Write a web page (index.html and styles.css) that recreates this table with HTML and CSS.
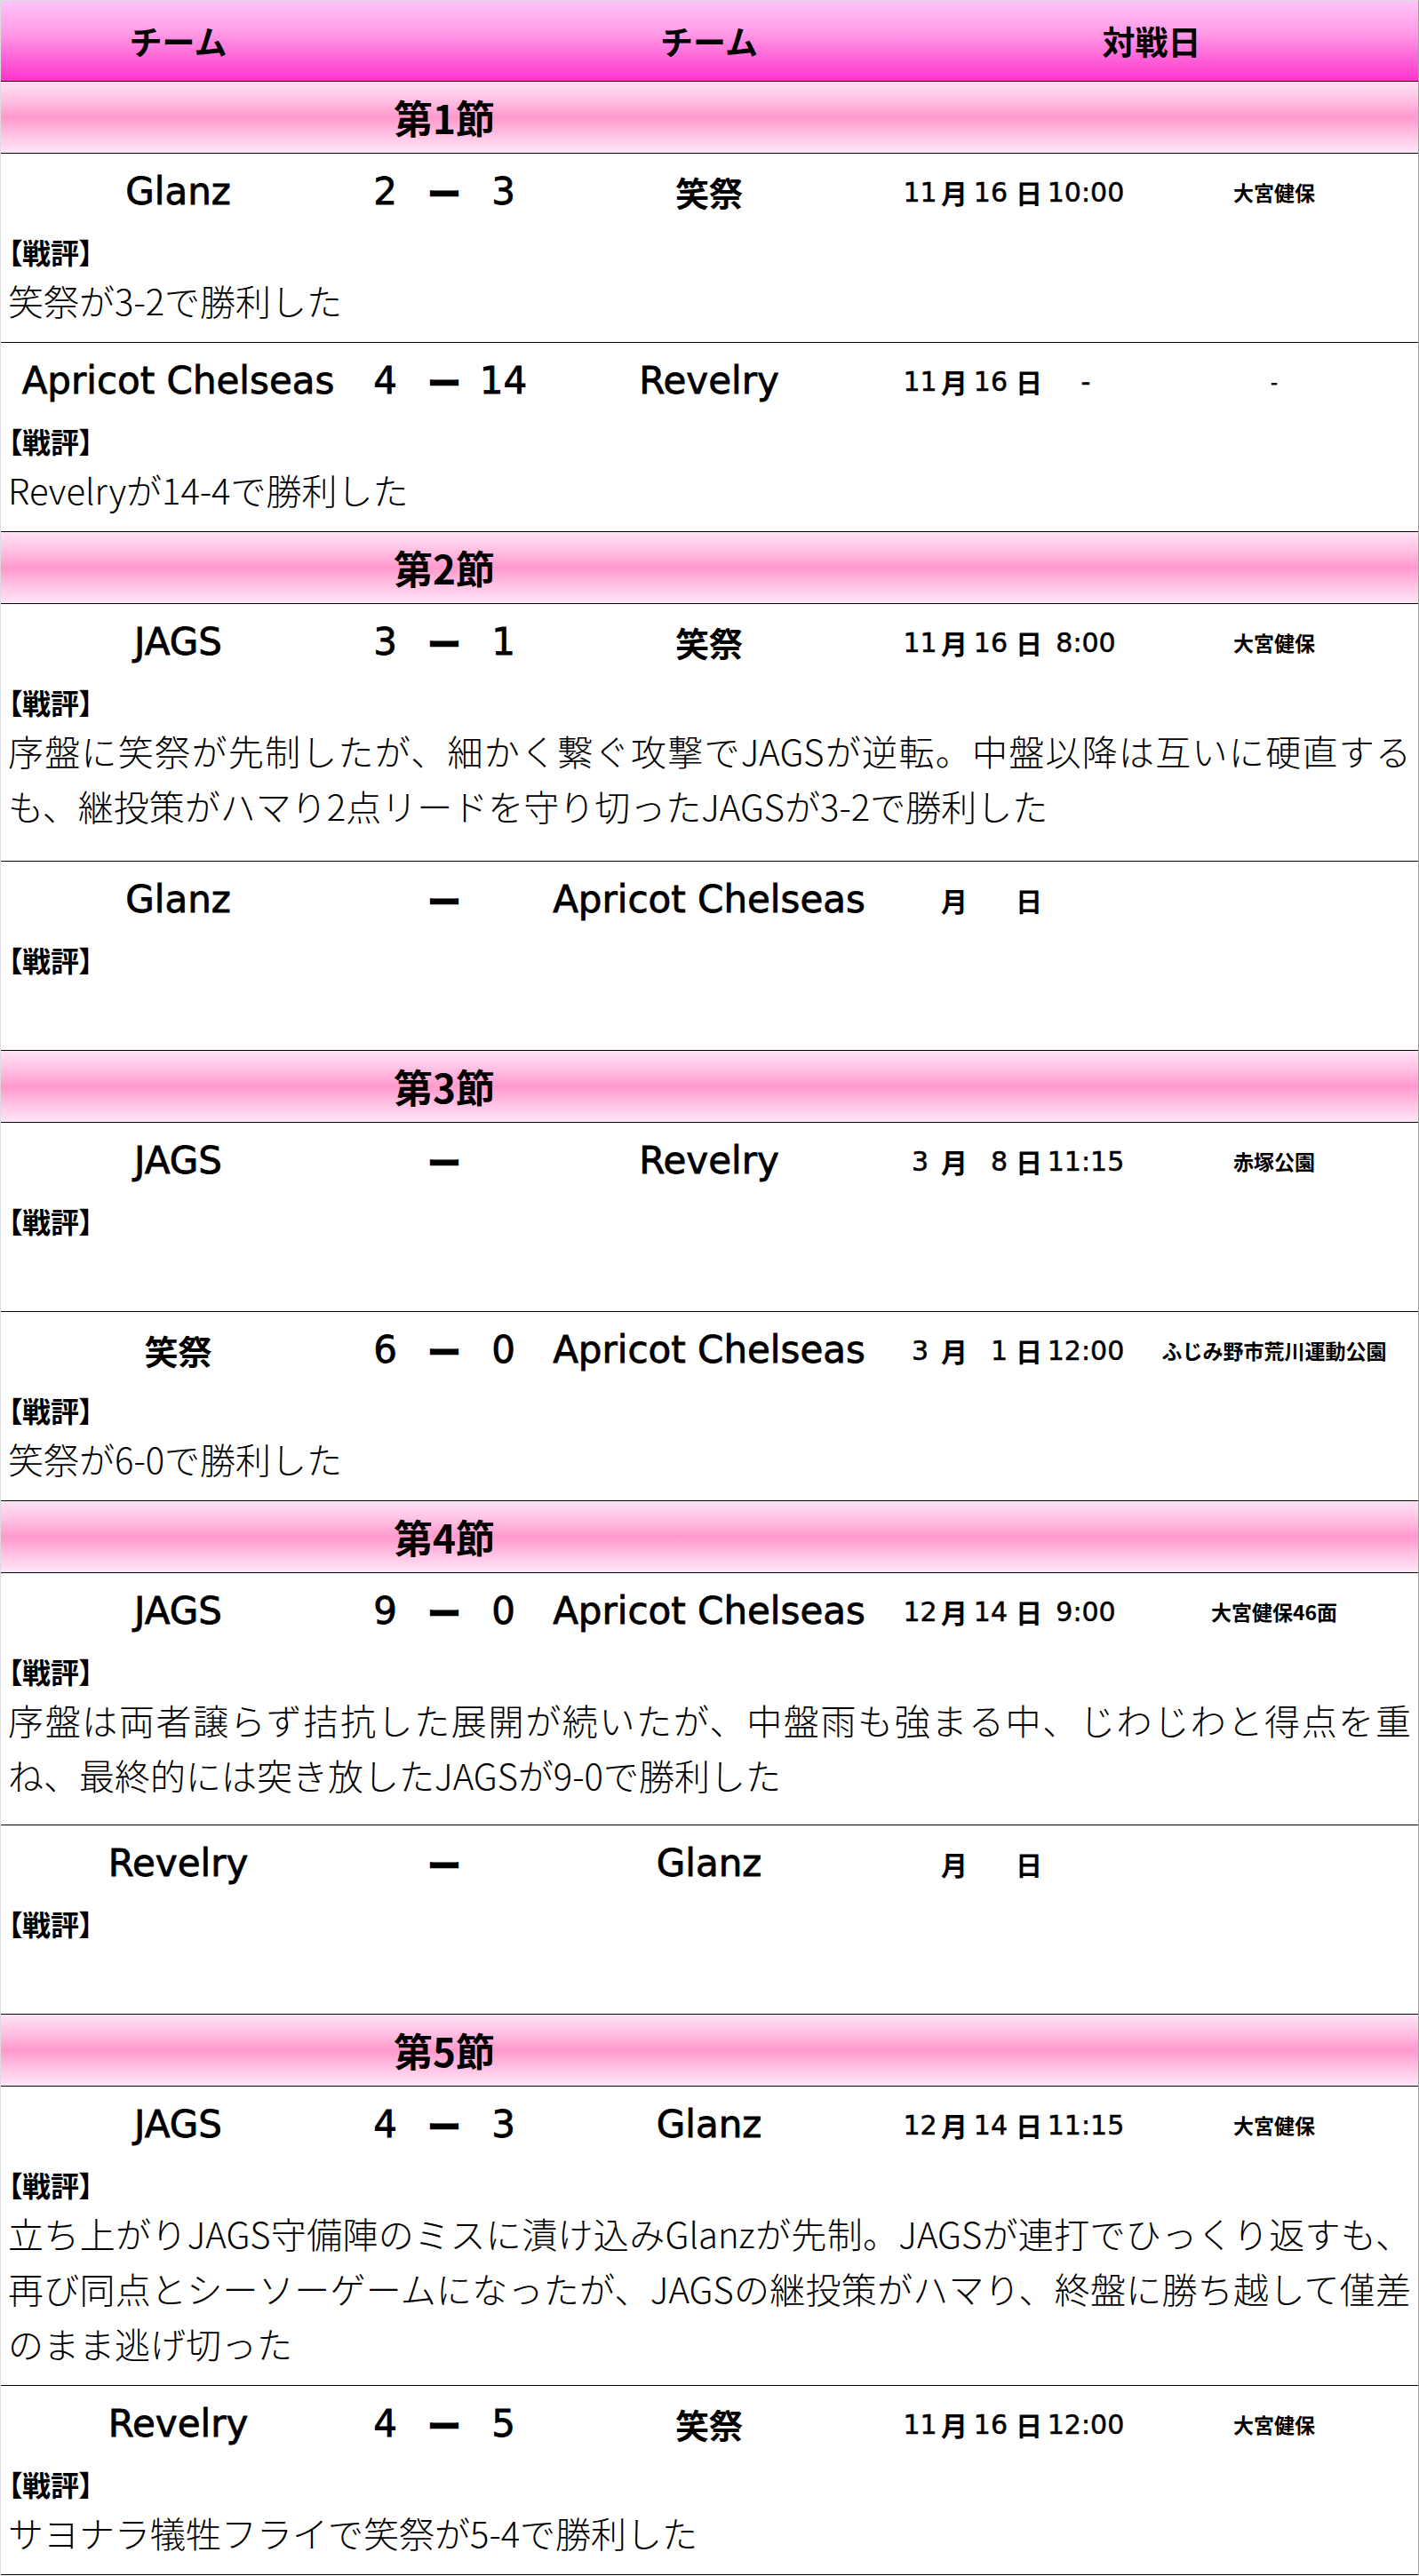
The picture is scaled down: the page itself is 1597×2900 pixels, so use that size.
FILE: index.html
```html
<!DOCTYPE html>
<html lang="ja">
<head>
<meta charset="utf-8">
<title>対戦表</title>
<link rel="stylesheet" href="styles.css">
</head>
<body>
<div class="board">
  <div class="grid head">
    <div class="h-team1">チーム</div>
    <div class="h-team2">チーム</div>
    <div class="h-when">対戦日</div>
  </div>

  <div class="grid sec"><div class="sec-label">第1節</div></div>

  <div class="match">
    <div class="grid line">
      <div class="team t1">Glanz</div>
      <div class="sc s1">2</div><div class="sc dash">ー</div><div class="sc s2">3</div>
      <div class="team t2 jp">笑祭</div>
      <div class="date"><span class="mon">11</span><span class="u um">月</span><span class="day">16</span><span class="u ud">日</span><span class="time">10:00</span></div>
      <div class="venue">大宮健保</div>
    </div>
    <div class="label">【戦評】</div>
    <div class="comment">笑祭が3-2で勝利した</div>
  </div>

  <div class="match">
    <div class="grid line">
      <div class="team t1">Apricot Chelseas</div>
      <div class="sc s1">4</div><div class="sc dash">ー</div><div class="sc s2">14</div>
      <div class="team t2">Revelry</div>
      <div class="date"><span class="mon">11</span><span class="u um">月</span><span class="day">16</span><span class="u ud">日</span><span class="time">-</span></div>
      <div class="venue">-</div>
    </div>
    <div class="label">【戦評】</div>
    <div class="comment">Revelryが14-4で勝利した</div>
  </div>

  <div class="grid sec"><div class="sec-label">第2節</div></div>

  <div class="match long-a">
    <div class="grid line">
      <div class="team t1">JAGS</div>
      <div class="sc s1">3</div><div class="sc dash">ー</div><div class="sc s2">1</div>
      <div class="team t2 jp">笑祭</div>
      <div class="date"><span class="mon">11</span><span class="u um">月</span><span class="day">16</span><span class="u ud">日</span><span class="time">8:00</span></div>
      <div class="venue">大宮健保</div>
    </div>
    <div class="label">【戦評】</div>
    <div class="comment">序盤に笑祭が先制したが、細かく繋ぐ攻撃でJAGSが逆転。中盤以降は互いに硬直するも、継投策がハマり2点リードを守り切ったJAGSが3-2で勝利した</div>
  </div>

  <div class="match">
    <div class="grid line">
      <div class="team t1">Glanz</div>
      <div class="sc s1"></div><div class="sc dash">ー</div><div class="sc s2"></div>
      <div class="team t2">Apricot Chelseas</div>
      <div class="date"><span class="mon"></span><span class="u um">月</span><span class="day"></span><span class="u ud">日</span><span class="time"></span></div>
      <div class="venue"></div>
    </div>
    <div class="label">【戦評】</div>
    <div class="comment">&nbsp;</div>
  </div>

  <div class="grid sec"><div class="sec-label">第3節</div></div>

  <div class="match">
    <div class="grid line">
      <div class="team t1">JAGS</div>
      <div class="sc s1"></div><div class="sc dash">ー</div><div class="sc s2"></div>
      <div class="team t2">Revelry</div>
      <div class="date"><span class="mon">3</span><span class="u um">月</span><span class="day">8</span><span class="u ud">日</span><span class="time">11:15</span></div>
      <div class="venue">赤塚公園</div>
    </div>
    <div class="label">【戦評】</div>
    <div class="comment">&nbsp;</div>
  </div>

  <div class="match">
    <div class="grid line">
      <div class="team t1 jp">笑祭</div>
      <div class="sc s1">6</div><div class="sc dash">ー</div><div class="sc s2">0</div>
      <div class="team t2">Apricot Chelseas</div>
      <div class="date"><span class="mon">3</span><span class="u um">月</span><span class="day">1</span><span class="u ud">日</span><span class="time">12:00</span></div>
      <div class="venue">ふじみ野市荒川運動公園</div>
    </div>
    <div class="label">【戦評】</div>
    <div class="comment">笑祭が6-0で勝利した</div>
  </div>

  <div class="grid sec"><div class="sec-label">第4節</div></div>

  <div class="match long-b">
    <div class="grid line">
      <div class="team t1">JAGS</div>
      <div class="sc s1">9</div><div class="sc dash">ー</div><div class="sc s2">0</div>
      <div class="team t2">Apricot Chelseas</div>
      <div class="date"><span class="mon">12</span><span class="u um">月</span><span class="day">14</span><span class="u ud">日</span><span class="time">9:00</span></div>
      <div class="venue">大宮健保46面</div>
    </div>
    <div class="label">【戦評】</div>
    <div class="comment">序盤は両者譲らず拮抗した展開が続いたが、中盤雨も強まる中、じわじわと得点を重ね、最終的には突き放したJAGSが9-0で勝利した</div>
  </div>

  <div class="match">
    <div class="grid line">
      <div class="team t1">Revelry</div>
      <div class="sc s1"></div><div class="sc dash">ー</div><div class="sc s2"></div>
      <div class="team t2">Glanz</div>
      <div class="date"><span class="mon"></span><span class="u um">月</span><span class="day"></span><span class="u ud">日</span><span class="time"></span></div>
      <div class="venue"></div>
    </div>
    <div class="label">【戦評】</div>
    <div class="comment">&nbsp;</div>
  </div>

  <div class="grid sec"><div class="sec-label">第5節</div></div>

  <div class="match">
    <div class="grid line">
      <div class="team t1">JAGS</div>
      <div class="sc s1">4</div><div class="sc dash">ー</div><div class="sc s2">3</div>
      <div class="team t2">Glanz</div>
      <div class="date"><span class="mon">12</span><span class="u um">月</span><span class="day">14</span><span class="u ud">日</span><span class="time">11:15</span></div>
      <div class="venue">大宮健保</div>
    </div>
    <div class="label">【戦評】</div>
    <div class="comment">立ち上がりJAGS守備陣のミスに漬け込みGlanzが先制。JAGSが連打でひっくり返すも、再び同点とシーソーゲームになったが、JAGSの継投策がハマり、終盤に勝ち越して僅差のまま逃げ切った</div>
  </div>

  <div class="match">
    <div class="grid line">
      <div class="team t1">Revelry</div>
      <div class="sc s1">4</div><div class="sc dash">ー</div><div class="sc s2">5</div>
      <div class="team t2 jp">笑祭</div>
      <div class="date"><span class="mon">11</span><span class="u um">月</span><span class="day">16</span><span class="u ud">日</span><span class="time">12:00</span></div>
      <div class="venue">大宮健保</div>
    </div>
    <div class="label">【戦評】</div>
    <div class="comment">サヨナラ犠牲フライで笑祭が5-4で勝利した</div>
  </div>
</div>
</body>
</html>
```

FILE: styles.css
```css
html, body {
  margin: 0;
  padding: 0;
  background: #ffffff;
}

body {
  font-family: "Noto Sans CJK JP", sans-serif;
  color: #000;
}

.board {
  width: 1597px;
  box-sizing: border-box;
  border-style: solid;
  border-width: 1px 1px 0 1px;
  border-color: #dcdcdc #a0a0a0 #a0a0a0 #dcdcdc;
}

.grid {
  display: grid;
  grid-template-columns: 399px 67px 66px 67px 396px 276px 324px;
  align-items: center;
}

/* header */
.head {
  height: 90px;
  border-bottom: 1px solid #000;
  background: linear-gradient(to bottom, #ffc4f8 0%, #ff9ae6 40%, #ff33cc 100%);
  font-weight: 700;
  font-size: 37px;
}
.h-team1, .h-team2, .h-when {
  text-align: center;
  line-height: 90px;
}
.h-team1 { grid-column: 1; }
.h-team2 { grid-column: 5; }
.h-when { grid-column: 6 / 8; }

/* section rows */
.sec {
  height: 80px;
  border-bottom: 1px solid #000;
  background: linear-gradient(to bottom, #ffe2f5 0%, #ffc2e4 25%, #ff99cc 50%, #ffc2e4 75%, #ffe6f7 100%);
}
.sec-label {
  grid-column: 2 / 5;
  text-align: center;
  font-weight: 700;
  font-size: 44px;
  line-height: 80px;
}

/* match blocks */
.match {
  border-bottom: 1px solid #000;
  padding-bottom: 16px;
}
.match.long-a {
  padding-bottom: 31px;
}
.match.long-b {
  padding-bottom: 25px;
}
.line {
  height: 86px;
}
.team, .sc {
  text-align: center;
  font-family: "DejaVu Sans", "Noto Sans CJK JP", sans-serif;
  font-weight: 400;
  font-size: 42px;
  line-height: 86px;
  white-space: nowrap;
  -webkit-text-stroke: 0.8px #000;
}
.team.jp {
  font-family: "Noto Sans CJK JP", sans-serif;
  font-weight: 700;
  font-size: 38px;
  -webkit-text-stroke: 0;
}
.t1 { grid-column: 1; }
.s1 { grid-column: 2; }
.dash {
  grid-column: 3;
  font-family: "Noto Sans CJK JP", sans-serif;
  font-weight: 700;
  font-size: 38px;
  -webkit-text-stroke: 1.2px #000;
}
.s2 { grid-column: 4; }
.t2 { grid-column: 5; }

.date {
  grid-column: 6;
  display: flex;
  align-items: center;
  padding-left: 20px;
  font-family: "DejaVu Sans", "Noto Sans CJK JP", sans-serif;
  font-size: 30px;
  white-space: nowrap;
  -webkit-text-stroke: 0.5px #000;
}
.date > span {
  flex: none;
}
.date .mon {
  width: 39px;
  text-align: center;
}
.date .u {
  width: 30px;
  font-family: "Noto Sans CJK JP", sans-serif;
  font-weight: 700;
  -webkit-text-stroke: 0;
}
.date .um {
  margin-left: 4px;
}
.date .ud {
  margin-left: 6px;
}
.date .day {
  width: 48px;
  text-align: right;
  padding-right: 3px;
  box-sizing: border-box;
}
.date .time {
  width: 98px;
  text-align: center;
}

.venue {
  grid-column: 7;
  text-align: center;
  font-family: "Noto Sans CJK JP", sans-serif;
  font-weight: 700;
  font-size: 23px;
  white-space: nowrap;
}

.label {
  padding-left: 8px;
  font-family: "Noto Sans CJK JP", sans-serif;
  font-weight: 700;
  font-size: 32px;
  line-height: 48px;
  font-feature-settings: "palt";
}

.comment {
  padding: 0 8px;
  font-family: "Noto Sans CJK JP", sans-serif;
  font-weight: 300;
  font-size: 40px;
  line-height: 62px;
  text-align: justify;
}
```
